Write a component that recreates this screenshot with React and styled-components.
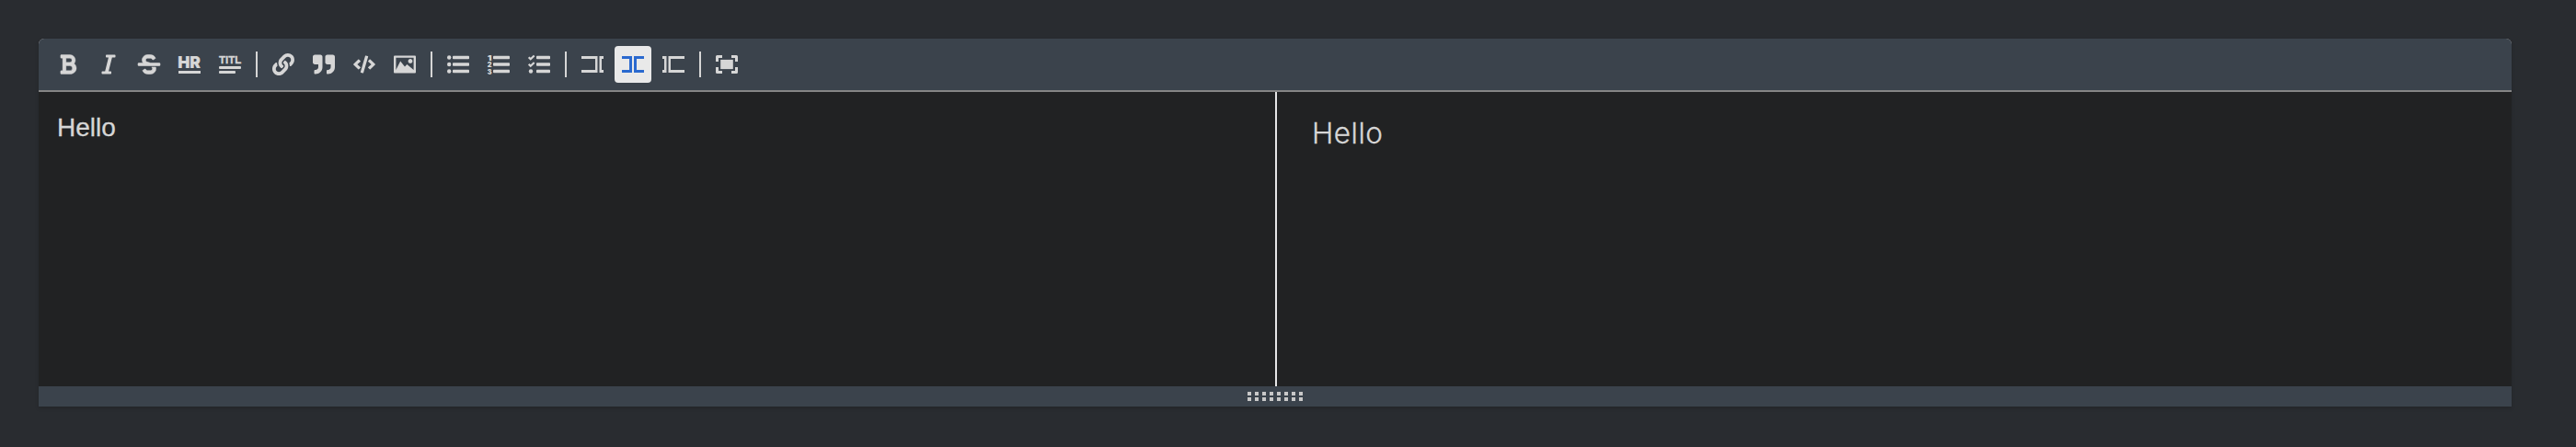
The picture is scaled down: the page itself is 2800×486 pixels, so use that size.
import React from 'react';
import styled, { createGlobalStyle, css } from 'styled-components';
import { FaBold, FaItalic, FaStrikethrough, FaLink, FaQuoteRight, FaCode } from 'react-icons/fa';

const Global = createGlobalStyle`
  * { box-sizing: border-box; }
  body { margin: 0; background: #292c30; }
`;

const Page = styled.main`
  height: 486px;
  padding: 42px 70px 44px 42px;
  background: #292c30;
`;

const Editor = styled.section`
  display: flex;
  flex-direction: column;
  height: 400px;
  border-radius: 6px 6px 0 0;
  background: #c8c8c8;
  color: #d6d6d6;
  box-shadow: 0 2px 4px rgba(0, 0, 0, 0.16);
`;

const Toolbar = styled.header`
  display: flex;
  align-items: center;
  height: 58px;
  padding: 0 12px;
  background: #3b434c;
  border-bottom: 2px solid #858585;
  border-radius: 6px 6px 0 0;
`;

const Button = styled.button`
  display: flex;
  align-items: center;
  justify-content: center;
  width: 40px;
  height: 40px;
  margin: 0 4px 0 0;
  padding: 0;
  border: 0;
  border-radius: 4px;
  background: transparent;
  color: #d6d6d6;
  ${(p) => p.$active && css`
    background: #e9e9e9;
    color: #2a69cf;
  `}
  svg {
    display: block;
    width: 24px;
    height: 24px;
    fill: currentColor;
    overflow: visible;
  }
`;

const BoldIcon = styled(FaBold)`
  stroke: currentColor;
  stroke-width: 8px;
`;

const StrikeIcon = styled(FaStrikethrough)`
  stroke: currentColor;
  stroke-width: 12px;
`;

const Divider = styled.span`
  width: 2px;
  height: 28px;
  margin: 0 8px 0 4px;
  background: #d6d6d6;
`;

const Panes = styled.div`
  display: flex;
  height: 320px;
  background: #212223;
`;

const Source = styled.div`
  width: 1344px;
  padding: 21px 20px;
  font: 28px/36px 'Liberation Sans', Arial, sans-serif;
  -webkit-text-stroke: 0.3px currentColor;
`;

const Preview = styled.div`
  flex: 1;
  padding: 20px 38px;
  border-left: 2px solid #e6e6e6;
  font: 300 31.5px/50px Inter, sans-serif;
  letter-spacing: 0.5px;
  -webkit-text-stroke: 0.3px currentColor;
`;

const ResizeBar = styled.footer`
  display: flex;
  justify-content: center;
  height: 22px;
  padding-top: 6px;
  background: #3b434c;
`;

const Grip = styled.svg`
  display: block;
  width: 60px;
  height: 10px;
  fill: #c8c8c8;
`;

const Glyph = ({ children }) => <svg viewBox="0 0 24 24">{children}</svg>;

const Lettering = styled.text`
  font-family: ${(p) => p.$family || 'Inter'}, 'Open Sans', sans-serif;
  font-weight: 900;
  font-size: ${(p) => p.$size}px;
  stroke: currentColor;
  stroke-width: ${(p) => p.$stroke || 0}px;
`;

const Rule = () => (
  <Glyph>
    <Lettering $size={18} $stroke={0.2} x="-0.8" y="16" textLength="24.8" lengthAdjust="spacingAndGlyphs">HR</Lettering>
    <rect y="19" width="24" height="3" />
  </Glyph>
);

const Title = () => (
  <Glyph>
    <Lettering $family="'Liberation Sans'" $size={11.6} $stroke={0.3} x="0" y="11.4" textLength="24.4" lengthAdjust="spacing">TITL</Lettering>
    <rect y="14" width="24" height="3.1" rx="1" />
    <rect y="19" width="18" height="3" rx="1" />
  </Glyph>
);

const Picture = () => (
  <svg viewBox="0 0 20 20">
    <path d="M15 9c1.1 0 2-.9 2-2s-.9-2-2-2-2 .9-2 2 .9 2 2 2zm4-7H1c-.55 0-1 .45-1 1v14c0 .55.45 1 1 1h18c.55 0 1-.45 1-1V3c0-.55-.45-1-1-1zm-1 13l-6-5-2 2-4-5-4 8V4h16v11z" />
  </svg>
);

const rows = [4.5, 12, 19.5];
const Lines = ({ x }) => rows.map((y) => (
  <rect key={y} x={x} y={y - 1.8} width={24 - x} height="3.6" rx="0.8" />
));

const Bullets = () => (
  <Glyph>
    {rows.map((y) => <circle key={y} cx="2.2" cy={y} r="2.2" />)}
    <Lines x={6} />
  </Glyph>
);

const Numbers = () => (
  <Glyph>
    {rows.map((y, i) => (
      <Lettering key={y} $size={8.2} x="-0.2" y={y + 3} textLength="4.8" lengthAdjust="spacingAndGlyphs">{i + 1}</Lettering>
    ))}
    <Lines x={6} />
  </Glyph>
);

const Checks = () => (
  <Glyph>
    {[4.5, 12].map((y) => (
      <path key={y} d={`M0.7 ${y - 0.2}l2 2 4-3.8`} fill="none" stroke="currentColor" strokeWidth="2.2" />
    ))}
    <circle cx="3" cy="19.5" r="2.2" />
    <Lines x={9} />
  </Glyph>
);

const EditMode = () => (
  <Glyph><path d="M0 3h17.5v18H0v-3h15V6H0zM24 3h-4.5v18H24v-3h-2V6h2z" /></Glyph>
);
const LiveMode = () => (
  <Glyph><path d="M0 3h11v18H0v-3h8V6H0zM24 3H13v18h11v-3h-8V6h8z" /></Glyph>
);
const PreviewMode = () => (
  <Glyph><path d="M24 3H6.5v18H24v-3H9V6h15zM0 3h4.5v18H0v-3h2V6H0z" /></Glyph>
);
const Fullscreen = () => (
  <Glyph>
    <rect x="5.2" y="6.9" width="13.6" height="10.2" />
    <path d="M0 9V3.5Q0 2 1.5 2H7v3H3v4zM17 2h5.5Q24 2 24 3.5V9h-3V5h-4zM24 15v5.5q0 1.5-1.5 1.5H17v-3h4v-4zM7 22H1.5Q0 22 0 20.5V15h3v4h4z" />
  </Glyph>
);

const groups = [
  [['Bold', BoldIcon], ['Italic', FaItalic], ['Strikethrough', StrikeIcon], ['Horizontal rule', Rule], ['Title', Title]],
  [['Link', FaLink], ['Quote', FaQuoteRight], ['Code', FaCode], ['Image', Picture]],
  [['Unordered list', Bullets], ['Ordered list', Numbers], ['Checked list', Checks]],
  [['Edit', EditMode], ['Live', LiveMode], ['Preview', PreviewMode]],
  [['Fullscreen', Fullscreen]],
];

export default function App() {
  return (
    <Page>
      <Global />
      <Editor>
        <Toolbar>
          {groups.map((group, i) => (
            <React.Fragment key={i}>
              {i > 0 && <Divider />}
              {group.map(([label, Icon]) => (
                <Button key={label} aria-label={label} $active={label === 'Live'}><Icon /></Button>
              ))}
            </React.Fragment>
          ))}
        </Toolbar>
        <Panes>
          <Source>Hello</Source>
          <Preview>Hello</Preview>
        </Panes>
        <ResizeBar>
          <Grip viewBox="0 0 60 10">
            {[0, 6].map((y) => [0, 1, 2, 3, 4, 5, 6, 7].map((c) => (
              <rect key={`${y}-${c}`} x={c * 8} y={y} width="4" height="4" />
            )))}
          </Grip>
        </ResizeBar>
      </Editor>
    </Page>
  );
}
